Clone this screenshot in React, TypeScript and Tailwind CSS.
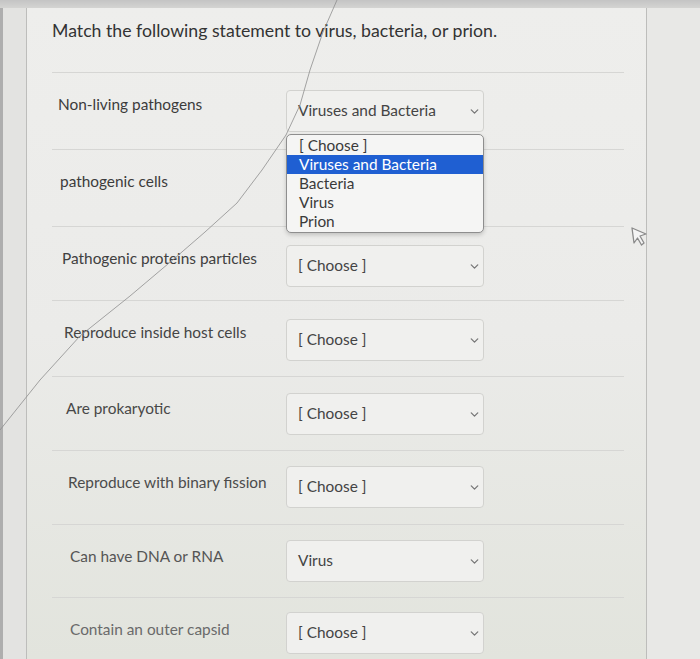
import { ChevronDown } from "lucide-react";

type Row = {
  label: string;
  value: string;
  height: string;
  pad: string;
  top: string;
  tone: string;
  open?: boolean;
  hidden?: boolean;
};

const rows: Row[] = [
  { label: "Non-living pathogens", value: "Viruses and Bacteria", height: "h-[77px]", pad: "pl-[6px]", top: "pt-[17px]", tone: "text-[#3c3c3c]", open: true },
  { label: "pathogenic cells", value: "[ Choose ]", height: "h-[77px]", pad: "pl-[8px]", top: "pt-[17px]", tone: "text-[#3c3c3c]", hidden: true },
  { label: "Pathogenic proteins particles", value: "[ Choose ]", height: "h-[74px]", pad: "pl-[10px]", top: "pt-[18px]", tone: "text-[#404040]" },
  { label: "Reproduce inside host cells", value: "[ Choose ]", height: "h-[76px]", pad: "pl-[12px]", top: "pt-[18px]", tone: "text-[#454545]" },
  { label: "Are prokaryotic", value: "[ Choose ]", height: "h-[74px]", pad: "pl-[14px]", top: "pt-[16px]", tone: "text-[#484848]" },
  { label: "Reproduce with binary fission", value: "[ Choose ]", height: "h-[74px]", pad: "pl-[16px]", top: "pt-[15px]", tone: "text-[#4c4c4c]" },
  { label: "Can have DNA or RNA", value: "Virus", height: "h-[73px]", pad: "pl-[18px]", top: "pt-[15px]", tone: "text-[#555555]" },
  { label: "Contain an outer capsid", value: "[ Choose ]", height: "h-[62px]", pad: "pl-[18px]", top: "pt-[14px]", tone: "text-[#6a6a6a]" },
];

const options = ["[ Choose ]", "Viruses and Bacteria", "Bacteria", "Virus", "Prion"];

function Select({ value, open, hidden }: { value: string; open?: boolean; hidden?: boolean }) {
  return (
    <div className={`relative w-[198px] ${hidden ? "invisible" : ""}`}>
      <div className="flex h-[42px] items-center justify-between rounded-[4px] border border-[#d2d2cf] bg-[#f0f0ee] pl-[11px] pr-[2px]">
        <span className="text-[15.4px] text-[#444]">{value}</span>
        <ChevronDown size={13} strokeWidth={2.4} className="text-[#777]" />
      </div>
      {/* open listbox */}
      {open && (
        <div className="absolute left-0 top-full z-10 mt-[2px] w-[198px] overflow-hidden rounded-[5px] border border-[#8e8e8e] bg-[#f5f5f4] py-[1px] shadow-[0_2px_4px_rgba(0,0,0,0.18)]">
          {options.map((o) => (
            <div
              key={o}
              className={`h-[19px] pl-[12px] text-[15.4px] leading-[19px] ${
                o === value ? "bg-[#1f5fd2] text-white" : "text-[#3a3a3a]"
              }`}
            >
              {o}
            </div>
          ))}
        </div>
      )}
    </div>
  );
}

export default function App() {
  return (
    <div className="relative h-[659px] w-[700px] overflow-hidden bg-[#e7e7e5] font-['Lato','Liberation_Sans',sans-serif]">
      <div className="h-[8px] bg-linear-to-b from-[#c4c4c4] to-[#d4d4d2]" />
      <div className="flex h-[651px]">
        {/* left gutter */}
        <div className="w-[26px] border-l-[3px] border-[#aeaeae] bg-[#e3e3e1]" />

        {/* card */}
        <div className="w-[621px] border-x border-[#bdbdbb] bg-linear-to-b from-[#eeeeec] via-[#ebebe9] to-[#e2e4dd] pl-[25px] pr-[22px]">
          <h1 className="pt-[11px] pb-[29px] text-[17.7px] leading-[24px] text-[#333]">
            Match the following statement to virus, bacteria, or prion.
          </h1>
          {rows.map((r) => (
            <div key={r.label} className={`flex items-start border-t border-[#d6d6d4] ${r.height}`}>
              <div className={`w-[234px] pt-[21px] text-[15.4px] leading-[20px] ${r.pad} ${r.tone}`}>{r.label}</div>
              <div className={r.top}>
                <Select value={r.value} open={r.open} hidden={r.hidden} />
              </div>
            </div>
          ))}
        </div>

        {/* right margin */}
        <div className="flex-1 bg-[#e8e8e6]" />
      </div>

      {/* crack in the screen glass */}
      <svg className="pointer-events-none absolute inset-0" width="700" height="659" viewBox="0 0 700 659">
        <polyline
          points="337,0 323,32 310,70 300,105 286,135 262,170 237,203 205,232 175,258 130,296 80,336 40,380 0,430"
          fill="none"
          stroke="#8f8f8f"
          strokeWidth="1"
          opacity="0.8"
        />
      </svg>

      {/* mouse pointer */}
      <svg className="pointer-events-none absolute left-[630px] top-[226px]" width="20" height="22" viewBox="0 0 20 22">
        <path
          d="M2 2 L16 8 L10 10 L14 17 L11.5 19 L7.5 12 L4 17 Z"
          fill="#f4f4f4"
          stroke="#8a8a8a"
          strokeWidth="1.3"
          strokeLinejoin="round"
        />
      </svg>
    </div>
  );
}
